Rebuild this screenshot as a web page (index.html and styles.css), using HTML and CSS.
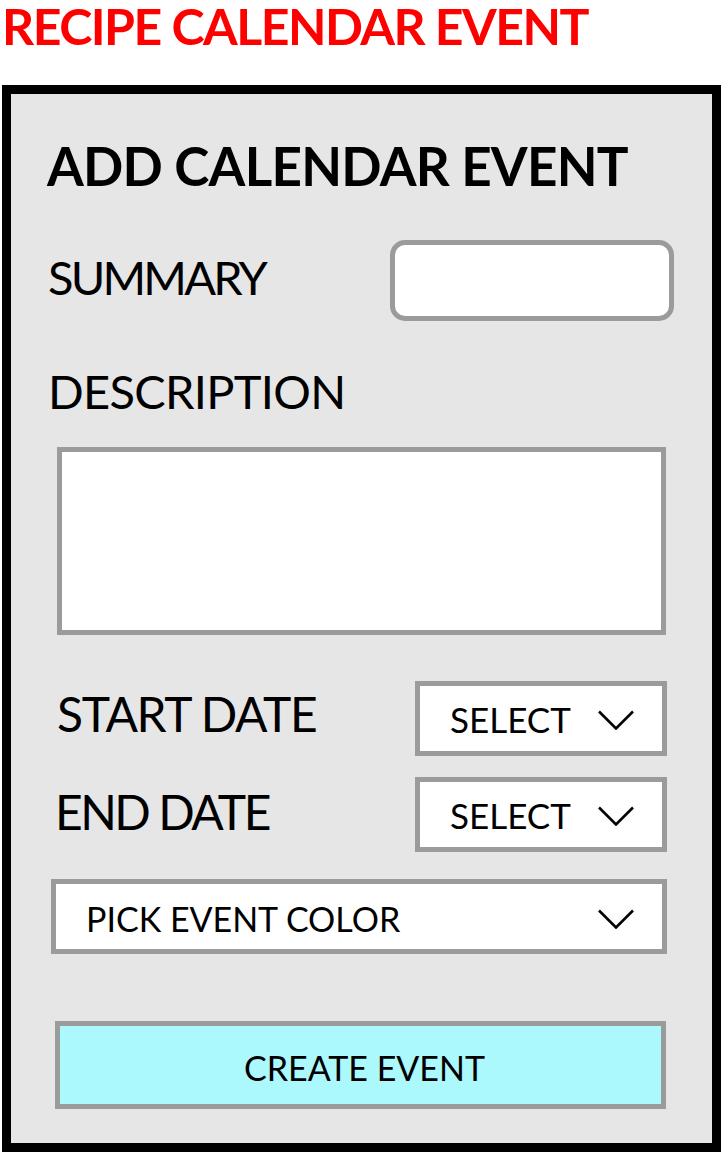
FILE: index.html
```html
<!DOCTYPE html>
<html>
<head>
<meta charset="utf-8">
<link rel="stylesheet" href="styles.css">
</head>
<body>
<h1 class="page-title">RECIPE CALENDAR EVENT</h1>
<section class="panel">
  <h2 class="panel-title">ADD CALENDAR EVENT</h2>
  <div class="row row-summary">
    <div class="label label-summary">SUMMARY</div>
    <div class="input-summary"></div>
  </div>
  <div class="label label-desc">DESCRIPTION</div>
  <div class="textarea"></div>
  <div class="row row-date row-start">
    <div class="label label-date label-start">START DATE</div>
    <div class="select">
      <span class="select-text">SELECT</span>
      <svg class="chevron" width="36" height="20" viewBox="0 0 36 20"><path d="M1 1.5 L18 18.5 L35 1.5" fill="none" stroke="#000" stroke-width="2.6"/></svg>
    </div>
  </div>
  <div class="row row-date row-end">
    <div class="label label-date label-end">END DATE</div>
    <div class="select">
      <span class="select-text">SELECT</span>
      <svg class="chevron" width="36" height="20" viewBox="0 0 36 20"><path d="M1 1.5 L18 18.5 L35 1.5" fill="none" stroke="#000" stroke-width="2.6"/></svg>
    </div>
  </div>
  <div class="color-select">
    <span class="color-text">PICK EVENT COLOR</span>
    <svg class="chevron" width="36" height="20" viewBox="0 0 36 20"><path d="M1 1.5 L18 18.5 L35 1.5" fill="none" stroke="#000" stroke-width="2.6"/></svg>
  </div>
  <div class="button">CREATE EVENT</div>
</section>
</body>
</html>
```

FILE: styles.css
```css
* { box-sizing: border-box; }
html, body { margin: 0; padding: 0; background: #fff; }
body {
  font-family: Lato, "Noto Sans", sans-serif;
  color: #000;
  width: 721px;
  height: 1152px;
  overflow: hidden;
}
.page-title {
  margin: 0 0 0 2px;
  padding-top: 1px;
  font-size: 50px;
  line-height: 50px;
  font-weight: 700;
  color: #ff0000;
  height: 60px;
  letter-spacing: -1.5px;
}
.panel {
  margin: 25px 0 0 2px;
  width: 719px;
  height: 1067px;
  border: 9px solid #000;
  background: #e6e6e6;
  display: flex;
  flex-direction: column;
}
.panel-title {
  margin: 45px 0 0 36px;
  font-size: 53px;
  line-height: 53px;
  font-weight: 700;
  letter-spacing: -0.75px;
}
.label {
  font-size: 47px;
  line-height: 47px;
  font-weight: 400;
}
.row {
  display: flex;
  align-items: flex-start;
}
.row-summary {
  margin-top: 48px;
  padding-left: 37px;
  padding-right: 38px;
}
.label-summary { margin-top: 14px; letter-spacing: -2.8px; }
.input-summary {
  margin-left: auto;
  width: 284px;
  height: 81px;
  background: #fff;
  border: 5px solid #9b9b9b;
  border-radius: 15px;
}
.label-desc { margin: 47px 0 0 37px; letter-spacing: -0.7px; }
.textarea {
  margin: 32px 0 0 46px;
  width: 609px;
  height: 188px;
  background: #fff;
  border: 5px solid #9b9b9b;
}
.row-date {
  padding-left: 46px;
  padding-right: 45px;
}
.row-start { margin-top: 46px; }
.row-end { margin-top: 21px; }
.label-date { font-size: 48px; line-height: 48px; margin-top: 9px; }
.label-start { letter-spacing: -1.3px; }
.label-end { margin-top: 11px; margin-left: -2px; letter-spacing: -2.5px; }
.select {
  margin-left: auto;
  width: 252px;
  height: 75px;
  background: #fff;
  border: 5px solid #9b9b9b;
  display: flex;
  align-items: flex-start;
  padding: 16px 28px 0 30px;
}
.select-text {
  font-size: 35px;
  line-height: 35px;
}
.chevron {
  margin-left: auto;
  margin-top: 8px;
}
.color-select {
  margin: 27px 0 0 40px;
  width: 616px;
  height: 75px;
  background: #fff;
  border: 5px solid #9b9b9b;
  display: flex;
  align-items: flex-start;
  padding: 18px 28px 0 30px;
}
.color-text {
  font-size: 34px;
  line-height: 34px;
}
.color-select .chevron { margin-top: 7px; }
.button {
  margin: 67px 0 0 44px;
  width: 611px;
  height: 88px;
  background: #abf8fd;
  border: 5px solid #9b9b9b;
  text-align: center;
  font-size: 34px;
  line-height: 34px;
  padding-top: 25px;
  padding-left: 8px;
}
```
